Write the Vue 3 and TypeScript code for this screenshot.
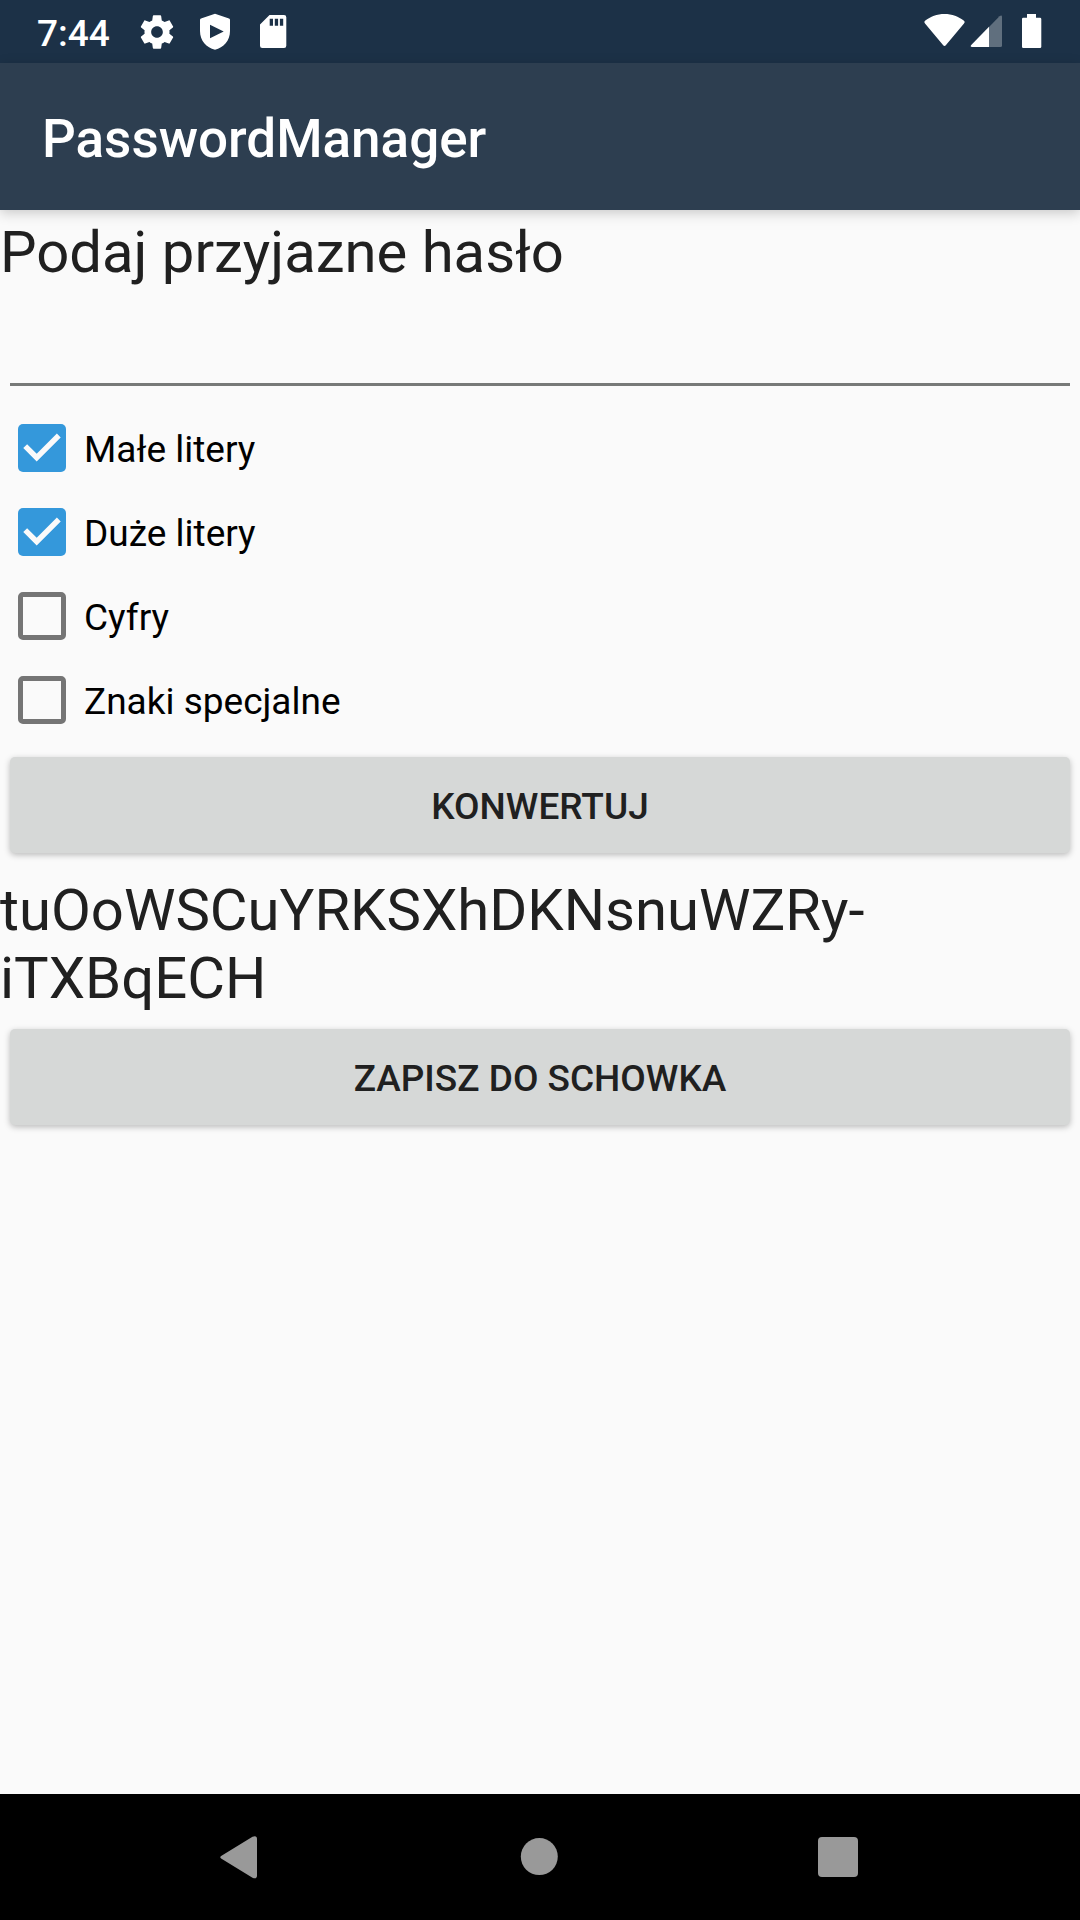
<script setup lang="ts">
import { ref } from 'vue'

interface CharacterOption {
  id: string
  label: string
  checked: boolean
}

const phrase = ref<string>('')
const password = ref<string>('tuOoWSCuYRKSXhDKNsnuWZRy-iTXBqECH')

const options = ref<CharacterOption[]>([
  { id: 'lowercase', label: 'Małe litery', checked: true },
  { id: 'uppercase', label: 'Duże litery', checked: true },
  { id: 'digits', label: 'Cyfry', checked: false },
  { id: 'special', label: 'Znaki specjalne', checked: false },
])
</script>

<template>
  <div class="screen">
    <div class="status-bar">
      <span class="clock">7:44</span>
      <div class="notifications">
        <svg class="notice" viewBox="0 0 24 24" aria-hidden="true">
          <path d="M19.43 12.98c.04-.32.07-.64.07-.98s-.03-.66-.07-.98l2.11-1.65c.19-.15.24-.42.12-.64l-2-3.46c-.12-.22-.39-.3-.61-.22l-2.49 1c-.52-.4-1.08-.73-1.69-.98l-.38-2.65C14.46 2.18 14.25 2 14 2h-4c-.25 0-.46.18-.49.42l-.38 2.65c-.61.25-1.17.59-1.69.98l-2.49-1c-.23-.09-.49 0-.61.22l-2 3.46c-.13.22-.07.49.12.64l2.11 1.65c-.04.32-.07.65-.07.98s.03.66.07.98l-2.11 1.65c-.19.15-.24.42-.12.64l2 3.46c.12.22.39.3.61.22l2.49-1c.52.4 1.08.73 1.69.98l.38 2.65c.03.24.24.42.49.42h4c.25 0 .46-.18.49-.42l.38-2.65c.61-.25 1.17-.59 1.69-.98l2.49 1c.23.09.49 0 .61-.22l2-3.46c.12-.22.07-.49-.12-.64l-2.11-1.65zM12 15.5c-1.93 0-3.5-1.57-3.5-3.5s1.57-3.5 3.5-3.5 3.500 1.570 3.500 3.500-1.570 3.500-3.500 3.500z" />
        </svg>
        <svg class="notice" viewBox="0 0 40 40" aria-hidden="true">
          <path fill-rule="evenodd" d="M20 1.700L34 6.600Q35 7 35 8V19C35 29 28.500 35.500 20 37.700C11.500 35.500 5 29 5 19V8Q5 7 6 6.600ZM15 12.700V26.300L28.700 19.500Z" />
        </svg>
        <svg class="notice" viewBox="0 0 40 40" aria-hidden="true">
          <path fill-rule="evenodd" d="M16.500 3H31Q33.300 3 33.300 5.300V33.700Q33.300 36 31 36H9.300Q7 36 7 33.700V12.500ZM16.700 6.700V13.700H20V6.700ZM21.800 6.700V13.700H25.100V6.700ZM26.900 6.700V13.700H30.200V6.700Z" />
        </svg>
      </div>
      <div class="system">
        <svg class="signal" viewBox="0 0 44 40" aria-hidden="true">
          <path d="M3 11.500Q1.500 10 3 8.800C8.500 4.500 15 2 22.500 2S36.500 4.500 42 8.800Q43.500 10 42 11.500L24 33Q22.500 35 21 33Z" />
        </svg>
        <svg class="signal" viewBox="0 0 44 40" aria-hidden="true">
          <path fill-opacity="0.3" d="M23 15L33.500 4.300Q36 2.500 36 5V33.500Q36 35 34.500 35H23Z" />
          <path d="M23 14.800V35H6Q4 35 5 33.300Z" />
        </svg>
        <svg class="signal" viewBox="0 0 44 40" aria-hidden="true">
          <path d="M17 2H26V5.700H30Q31.300 5.700 31.300 7V34.700Q31.300 36 30 36H13.300Q12 36 12 34.700V7Q12 5.700 13.300 5.700H17Z" />
        </svg>
      </div>
    </div>

    <header class="app-bar">
      <h1 class="title">PasswordManager</h1>
    </header>

    <main class="content">
      <label class="display-text" for="phrase">Podaj przyjazne hasło</label>
      <input id="phrase" v-model="phrase" class="phrase" type="text" autocomplete="off" />

      <label v-for="option in options" :key="option.id" class="option" :for="option.id">
        <input :id="option.id" v-model="option.checked" class="tick" type="checkbox" />
        <span class="option-text">{{ option.label }}</span>
      </label>

      <button class="action" type="button">KONWERTUJ</button>
      <output class="display-text" for="phrase">{{ password }}</output>
      <button class="action" type="button">ZAPISZ DO SCHOWKA</button>
    </main>

    <nav class="nav-bar">
      <button class="nav-button" type="button" aria-label="Wstecz">
        <svg class="nav-icon" viewBox="0 0 48 48" aria-hidden="true">
          <path d="M5.500 22.800L36.500 3.700Q41 2 41 6V42.500Q41 46.500 36.500 44.800L5.500 25.800Q3 24.300 5.500 22.800Z" />
        </svg>
      </button>
      <button class="nav-button" type="button" aria-label="Ekran główny">
        <svg class="nav-icon" viewBox="0 0 48 48" aria-hidden="true">
          <circle cx="23.300" cy="23.600" r="18.500" />
        </svg>
      </button>
      <button class="nav-button" type="button" aria-label="Ostatnie aplikacje">
        <svg class="nav-icon" viewBox="0 0 48 48" aria-hidden="true">
          <rect x="2" y="4" width="40" height="40" rx="4" />
        </svg>
      </button>
    </nav>
  </div>
</template>

<style>
body {
  margin: 0;
  background: #fafafa;
}
</style>

<style scoped>
.screen {
  display: flex;
  flex-direction: column;
  min-height: 100vh;
  background: #fafafa;
  color: #202020;
  font-family: Roboto, "Noto Sans", sans-serif;
}

.status-bar {
  display: flex;
  align-items: center;
  height: 63px;
  padding: 0 26px 0 37px;
  background: #1c3147;
  color: #fff;
}

.clock {
  padding-top: 5px;
  font-size: 37px;
  font-weight: 500;
  line-height: 44px;
}

.notifications {
  display: flex;
  gap: 18px;
  margin-left: 27px;
}

.system {
  display: flex;
  margin-left: auto;
}

.notice,
.signal {
  display: block;
  height: 40px;
  fill: #fff;
}

.notice {
  width: 40px;
}

.signal {
  width: 44px;
}

.app-bar {
  display: flex;
  align-items: center;
  box-sizing: border-box;
  height: 147px;
  padding: 4px 42px 0;
  background: #2d3e50;
  box-shadow: 0 3px 12px rgba(0, 0, 0, 0.2);
}

.title {
  margin: 0;
  color: #fff;
  font-size: 53px;
  font-weight: 500;
  line-height: 68px;
}

.content {
  display: flex;
  flex: 1;
  flex-direction: column;
}

.display-text {
  padding: 8px 0 2px;
  font-size: 58px;
  line-height: 68px;
}

.phrase {
  box-sizing: border-box;
  height: 98px;
  margin: 0 10px 20px;
  padding: 24px 0 12px;
  border: 0;
  border-bottom: 3px solid #777978;
  outline: 0;
  background: transparent;
  color: inherit;
  font: inherit;
  font-size: 48px;
}

.option {
  display: flex;
  align-items: center;
  gap: 18px;
  height: 84px;
  padding-left: 18px;
  color: #000;
  font-size: 37px;
  line-height: 44px;
}

.option-text {
  padding-top: 4px;
}

.tick {
  display: block;
  flex: none;
  box-sizing: border-box;
  width: 48px;
  height: 48px;
  margin: 0;
  border: 5px solid #757575;
  border-radius: 5px;
  appearance: none;
}

.tick:checked {
  border: 0;
  background: #3498db;
}

.tick:checked::before {
  display: block;
  width: 48px;
  height: 48px;
  background: #fafafa;
  clip-path: polygon(11% 50%, 19% 42%, 39% 62%, 81% 20%, 89% 28%, 39% 78%);
  content: "";
}

.action {
  height: 96px;
  margin: 15px 10px;
  padding: 4px 0 0;
  border: 0;
  border-radius: 5px;
  background: #d6d8d7;
  box-shadow: 0 2px 6px rgba(0, 0, 0, 0.26);
  color: #202020;
  font-family: inherit;
  font-size: 37px;
  font-weight: 500;
  line-height: 44px;
}

.nav-bar {
  display: flex;
  justify-content: center;
  gap: 90px;
  background: #000;
}

.nav-button {
  display: flex;
  align-items: center;
  justify-content: center;
  width: 210px;
  height: 126px;
  padding: 0;
  border: 0;
  background: transparent;
}

.nav-icon {
  width: 48px;
  height: 48px;
  fill: #999;
}
</style>
